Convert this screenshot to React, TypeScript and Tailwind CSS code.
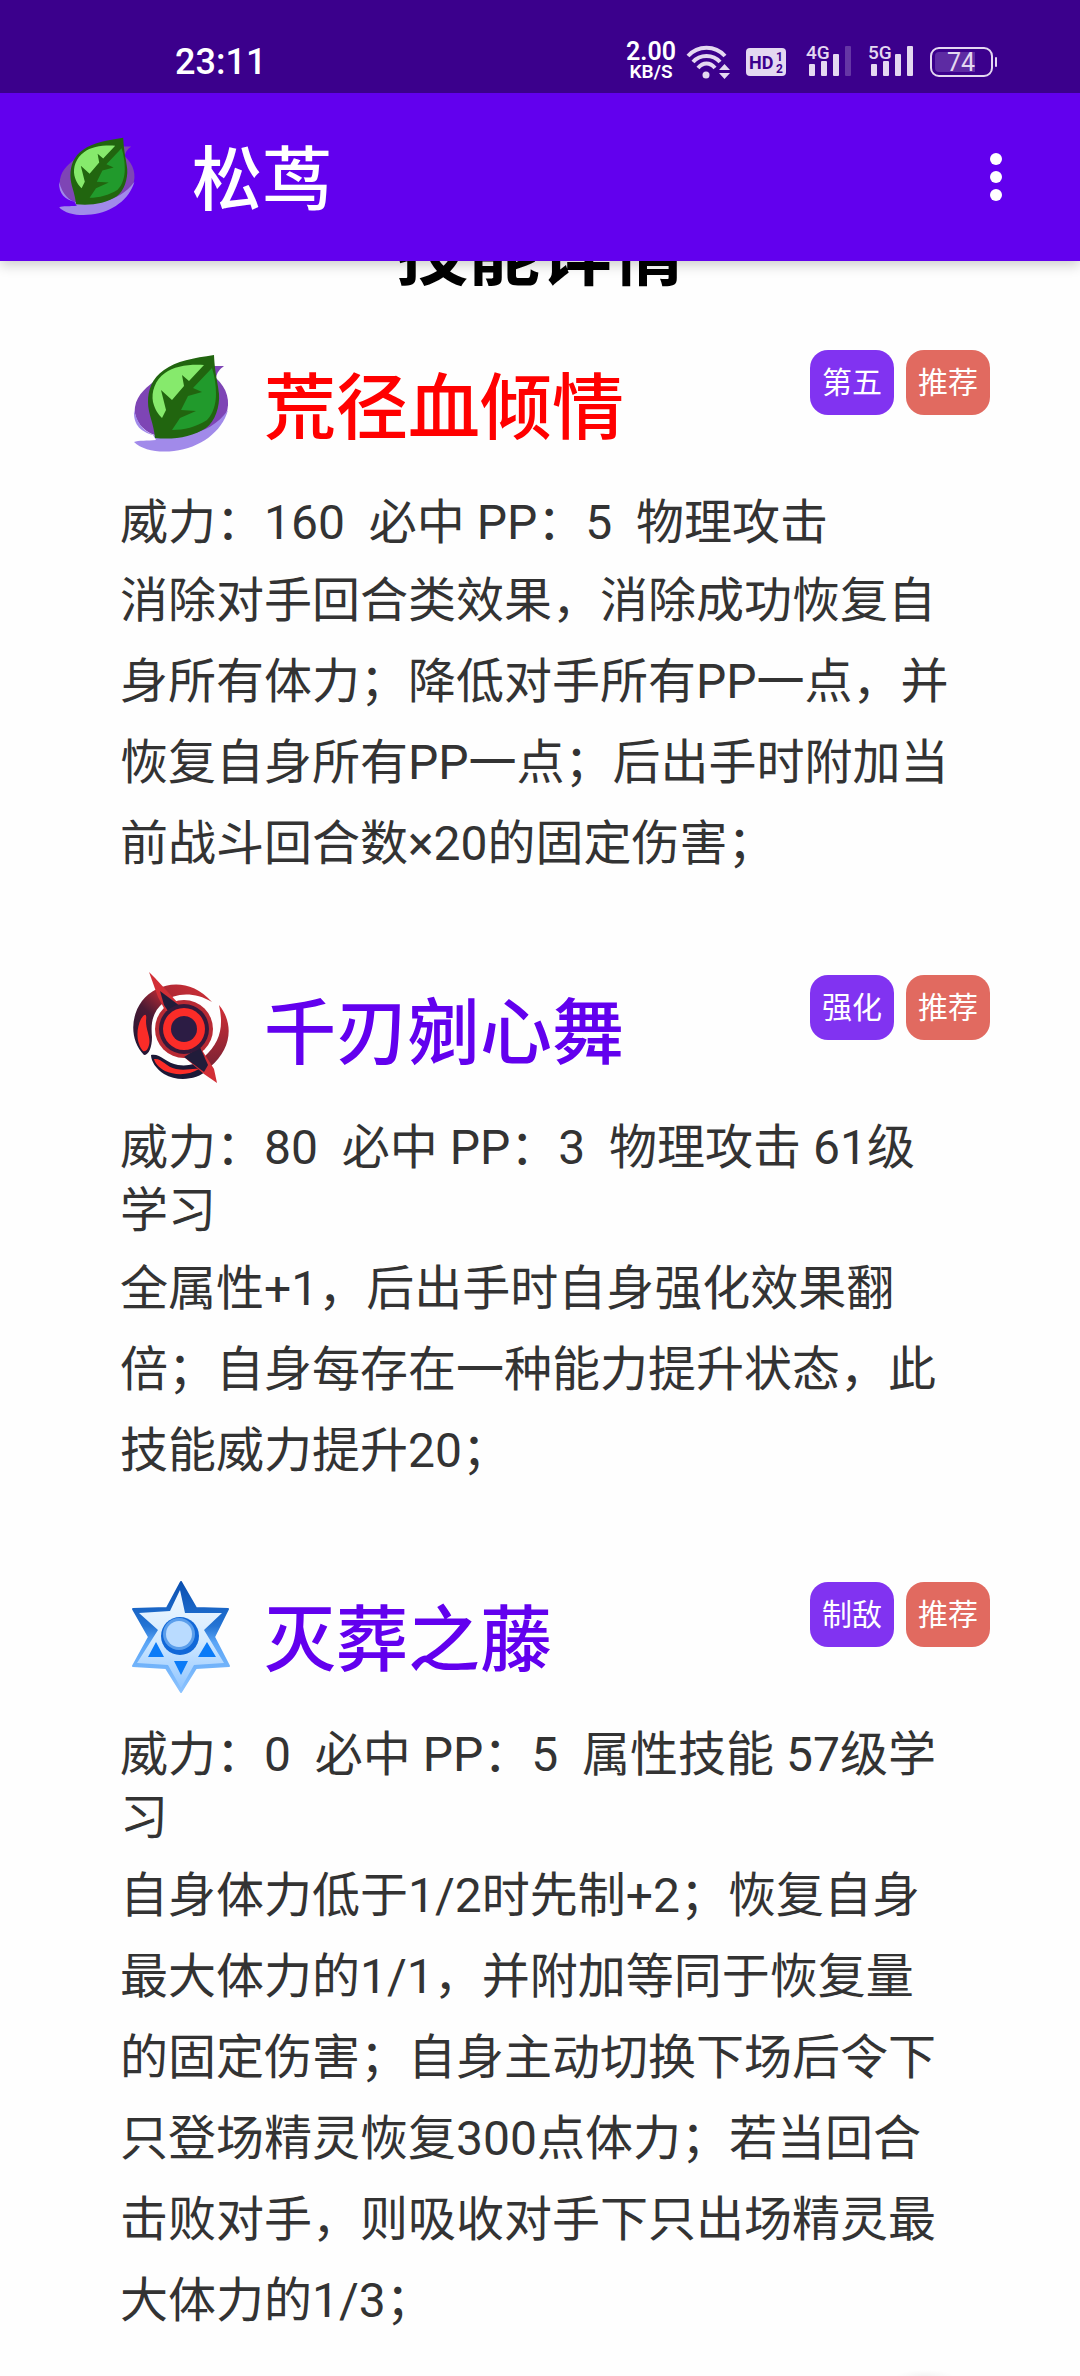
import React from 'react';

type IconProps = { className?: string };

const LeafIcon: React.FC<IconProps> = ({ className }) => (
    <svg viewBox="0 0 120 120" className={className} aria-hidden="true">
        <path d="M104 22C100 25 97 28 96 34C107 44 111 58 106 70C98 88 70 94 40 92C24 90 13 76 15 63C17 50 28 42 36 36L94 22Z" fill="#7e45b5" />
        <path d="M14 66C13 82 22 88 33 91L36 96C28 97 18 96 14 98C22 106 38 109 54 107C80 104 102 88 108 66C98 80 84 88 66 91L38 92C26 90 18 82 14 66Z" fill="#a18aea" />
        <path d="M94 11C74 14 56 17 44 26C32 34 28 46 28 58C28 70 34 80 35 94C54 96 72 93 86 84C95 78 100 62 99 50C98 38 95 32 94 11Z" fill="#21650f" />
        <path d="M84 21C70 20 54 22 45 29C35 36 31 48 33 58C35 66 38 70 42 74L46 66L41 46L52 56L64 42L62 31L69 37Z" fill="#86ea6c" />
        <path d="M92 24C95 33 96 42 96 50C96 60 93 70 87 76C76 83 64 86 52 86L60 74L76 67L61 66L68 52L82 48L73 44Z" fill="#219a2c" />
    </svg>
);

const BladeIcon: React.FC<IconProps> = ({ className }) => (
    <svg viewBox="0 0 120 120" className={className} aria-hidden="true">
        <defs>
            <linearGradient id="blade-arc" x1="0" y1="1" x2="1" y2="0">
                <stop offset="0" stopColor="#1b1836" />
                <stop offset="0.4" stopColor="#4a1a34" />
                <stop offset="0.6" stopColor="#a92834" />
                <stop offset="1" stopColor="#d22f36" />
            </linearGradient>
            <linearGradient id="blade-side" x1="0" y1="0" x2="0" y2="1">
                <stop offset="0" stopColor="#d22f36" />
                <stop offset="1" stopColor="#7a2234" />
            </linearGradient>
        </defs>
        <path d="M24 86C10 72 10 48 22 32C36 14 68 6 92 33C74 22 54 24 44 33C31 44 31 56 32 68C32 78 29 86 24 86Z" fill="url(#blade-arc)" />
        <path d="M23 82C16 74 16 60 21 50C25 44 27 44 26 52C26 62 31 68 29 76C28 80 26 83 23 82Z" fill="#fb2c28" />
        <path d="M99 36C114 54 112 80 90 98L84 88C100 74 104 58 99 36Z" fill="url(#blade-side)" />
        <path d="M31 86C40 84 46 94 58 96C70 98 76 93 84 94L88 101C76 111 58 113 44 105C36 100 31 92 31 86Z" fill="#1b1836" />
        <path d="M34 90C42 89 46 98 56 100C66 102 72 99 79 100C68 107 54 106 45 102C38 98 35 94 34 90Z" fill="#fb2c28" />
        <circle cx="64" cy="60" r="29" fill="#b82a34" />
        <path d="M29 3L35 9L58 34L47 45L38 28Z" fill="#d22f36" />
        <path d="M40 22L60 37L50 45L44 36Z" fill="#211c3a" />
        <path d="M97 114L94 100L80 78L64 88L84 105Z" fill="#d22f36" />
        <path d="M80 78L64 88L84 103L88 96Z" fill="#211c3a" />
        <circle cx="64" cy="60" r="25" fill="#35193a" />
        <circle cx="64" cy="60" r="21" fill="#fb2c28" />
        <circle cx="64" cy="60" r="13" fill="#2c1c44" />
    </svg>
);

const StarIcon: React.FC<IconProps> = ({ className }) => (
    <svg viewBox="0 0 120 120" className={className} aria-hidden="true">
        <defs>
            <linearGradient id="star-edge" x1="0" y1="0" x2="0" y2="1">
                <stop offset="0" stopColor="#0a4fb0" />
                <stop offset="0.4" stopColor="#2474d4" />
                <stop offset="0.55" stopColor="#5aa5f6" />
                <stop offset="1" stopColor="#8cc3ff" />
            </linearGradient>
            <linearGradient id="star-face" x1="0" y1="0" x2="0" y2="1">
                <stop offset="0" stopColor="#f2f9ff" />
                <stop offset="0.5" stopColor="#d3eaff" />
                <stop offset="1" stopColor="#92c6ff" />
            </linearGradient>
        </defs>
        <path d="M61 6L76 32L108 33L94 61L109 90L76 92L61 116L46 92L13 90L29 61L13 33L47 32Z" fill="url(#star-edge)" stroke="url(#star-edge)" strokeWidth="2" strokeLinejoin="round" />
        <path d="M60 14L65 37L102 37L84 54L104 87L74 89L61 112L48 89L17 87L38 54L19 37L50 35Z" fill="url(#star-face)" />
        <path d="M28 81L36 66L44 81ZM78 81L87 66L96 81ZM54 85H68L61 99Z" fill="#0b7bf7" />
        <circle cx="60" cy="60" r="19" fill="#1168d8" />
        <circle cx="59" cy="58" r="16" fill="#5b9eeb" />
        <circle cx="59" cy="58" r="13" fill="#b9dbff" />
    </svg>
);

const WifiIcon: React.FC = () => (
    <svg viewBox="0 0 44 36" className="h-9 w-11" aria-hidden="true">
        <g fill="none" stroke="#e4d8f1" strokeWidth="4">
            <path d="M2 12C12 1 29 1 39 12" />
            <path d="M7 18C14 10 27 10 34 18" />
            <path d="M12 24C17 18 24 18 29 24" />
        </g>
        <circle cx="20" cy="31" r="3.5" fill="#e4d8f1" />
        <path d="M33 26L38.500 20L44 26ZM33 29H44L38.500 35Z" fill="#e4d8f1" />
    </svg>
);

const HdIcon: React.FC = () => (
    <svg viewBox="0 0 44 28" className="h-7 w-11" aria-hidden="true">
        <rect width="40" height="28" rx="4" fill="#e4d8f1" />
        <g fill="#3b008c" fontFamily="Roboto, sans-serif" fontWeight="700">
            <text x="3" y="21" fontSize="18">HD</text>
            <text x="30" y="13" fontSize="12">1</text>
            <text x="30" y="25" fontSize="12">2</text>
        </g>
    </svg>
);

const SignalIcon: React.FC<{ label: string; level: number }> = ({ label, level }) => (
    <svg viewBox="0 0 46 44" className="h-11 w-[46px]" aria-label={label}>
        <text x="0" y="19" fontSize="19" fontWeight="500" fontFamily="Roboto, sans-serif" fill="#e4d8f1">{label}</text>
        {[24, 21, 14, 6].map((top, i) => (
            <rect key={top} x={3 + i * 12} y={top} width="6" height={36 - top} rx="1" fill="#e4d8f1" opacity={i < level ? 1 : 0.25} />
        ))}
    </svg>
);

const BatteryIcon: React.FC = () => (
    <svg viewBox="0 0 68 32" className="h-8 w-[68px]" aria-label="74%">
        <rect x="1" y="2" width="61" height="28" rx="8" fill="none" stroke="#e4d8f1" strokeWidth="2" />
        <path d="M9 6H45V26H9Q5 26 5 22V10Q5 6 9 6Z" fill="#5d2ba3" />
        <rect x="65" y="11" width="2" height="10" rx="1" fill="#e4d8f1" />
        <text x="31" y="25" fontSize="25" textAnchor="middle" fontFamily="Roboto, sans-serif" fill="#e4d8f1">74</text>
    </svg>
);

interface Skill {
    name: string;
    nameColor: string;
    icon: React.FC<IconProps>;
    tag: string;
    stats: string;
    description: string;
}

const skills: Skill[] = [
    {
        name: '荒径血倾情',
        nameColor: 'text-[#ff0000]',
        icon: LeafIcon,
        tag: '第五',
        stats: '威力：160  必中 PP：5  物理攻击',
        description: '消除对手回合类效果，消除成功恢复自身所有体力；降低对手所有PP一点，并恢复自身所有PP一点；后出手时附加当前战斗回合数×20的固定伤害；',
    },
    {
        name: '千刃剜心舞',
        nameColor: 'text-[#6200ee]',
        icon: BladeIcon,
        tag: '强化',
        stats: '威力：80  必中 PP：3  物理攻击 61级学习',
        description: '全属性+1，后出手时自身强化效果翻倍；自身每存在一种能力提升状态，此技能威力提升20；',
    },
    {
        name: '灭葬之藤',
        nameColor: 'text-[#6200ee]',
        icon: StarIcon,
        tag: '制敌',
        stats: '威力：0  必中 PP：5  属性技能 57级学习',
        description: '自身体力低于1/2时先制+2；恢复自身最大体力的1/1，并附加等同于恢复量的固定伤害；自身主动切换下场后令下只登场精灵恢复300点体力；若当回合击败对手，则吸收对手下只出场精灵最大体力的1/3；',
    },
];

const Tag: React.FC<{ className: string; children: React.ReactNode }> = ({ className, children }) => (
    <span className={`rounded-[18px] px-3 text-[30px] leading-[65px] text-white ${className}`}>{children}</span>
);

const SkillItem: React.FC<{ skill: Skill }> = ({ skill }) => {
    const Icon = skill.icon;

    return (
        <article>
            <div className="flex h-[141px] items-start pr-[90px] pl-[120px]">
                <Icon className="-mt-1.5 size-[120px] shrink-0" />
                <h3 className={`ml-6 flex-1 text-[72px] leading-[118px] font-medium ${skill.nameColor}`}>{skill.name}</h3>
                <div className="flex gap-3">
                    <Tag className="bg-[#8133f1]">{skill.tag}</Tag>
                    <Tag className="bg-[#e16a60]">推荐</Tag>
                </div>
            </div>
            <div className="px-[120px] text-[48px] text-[#333333]">
                <p className="leading-[63px] whitespace-pre-wrap">{skill.stats}</p>
                <p className="mt-1.5 leading-[81px]">{skill.description}</p>
            </div>
        </article>
    );
};

const App: React.FC = () => {
    return (
        <div className="relative min-h-screen overflow-hidden bg-[#fefefe] font-[Roboto,'Noto_Sans_CJK_SC',sans-serif]" lang="zh-CN">
            <div className="relative z-10 shadow-[0_4px_12px_rgba(0,0,0,0.2)]">
                <div className="flex h-[93px] items-center justify-between bg-[#3b008c] pt-[30px] pr-[82px] pl-[175px] text-white">
                    <time className="text-[36px] leading-10 font-medium">23:11</time>
                    <div className="flex items-center gap-4">
                        <div className="flex items-center gap-2.5">
                            <div className="text-center font-semibold">
                                <div className="text-[25px] leading-5">2.00</div>
                                <div className="text-[19px] leading-5">KB/S</div>
                            </div>
                            <WifiIcon />
                        </div>
                        <HdIcon />
                        <SignalIcon label="4G" level={3} />
                        <SignalIcon label="5G" level={4} />
                        <BatteryIcon />
                    </div>
                </div>
                <header className="flex h-[168px] items-center bg-[#6200ee] pr-12 pl-12 text-white">
                    <LeafIcon className="size-24 shrink-0" />
                    <h1 className="ml-12 flex-1 pt-2 text-[70px] leading-[100px] font-medium">松茑</h1>
                    <button type="button" aria-label="更多选项" className="flex h-24 w-[72px] flex-col items-center justify-center gap-1.5">
                        <span className="size-3 rounded-full bg-white" />
                        <span className="size-3 rounded-full bg-white" />
                        <span className="size-3 rounded-full bg-white" />
                    </button>
                </header>
            </div>

            <main>
                <h2 className="-mt-14 mb-[45px] text-center text-[72px] leading-[100px] font-bold text-black">技能详情</h2>
                <div className="flex flex-col gap-[91px]">
                    {skills.map((skill) => (
                        <SkillItem key={skill.name} skill={skill} />
                    ))}
                </div>
            </main>

            {/* top edge of the floating button's shadow */}
            <div className="absolute right-[125px] bottom-0 h-1.5 w-[60px] bg-[radial-gradient(ellipse_at_bottom,rgba(0,0,0,0.04),transparent_70%)]" />
        </div>
    );
};

export default App;
